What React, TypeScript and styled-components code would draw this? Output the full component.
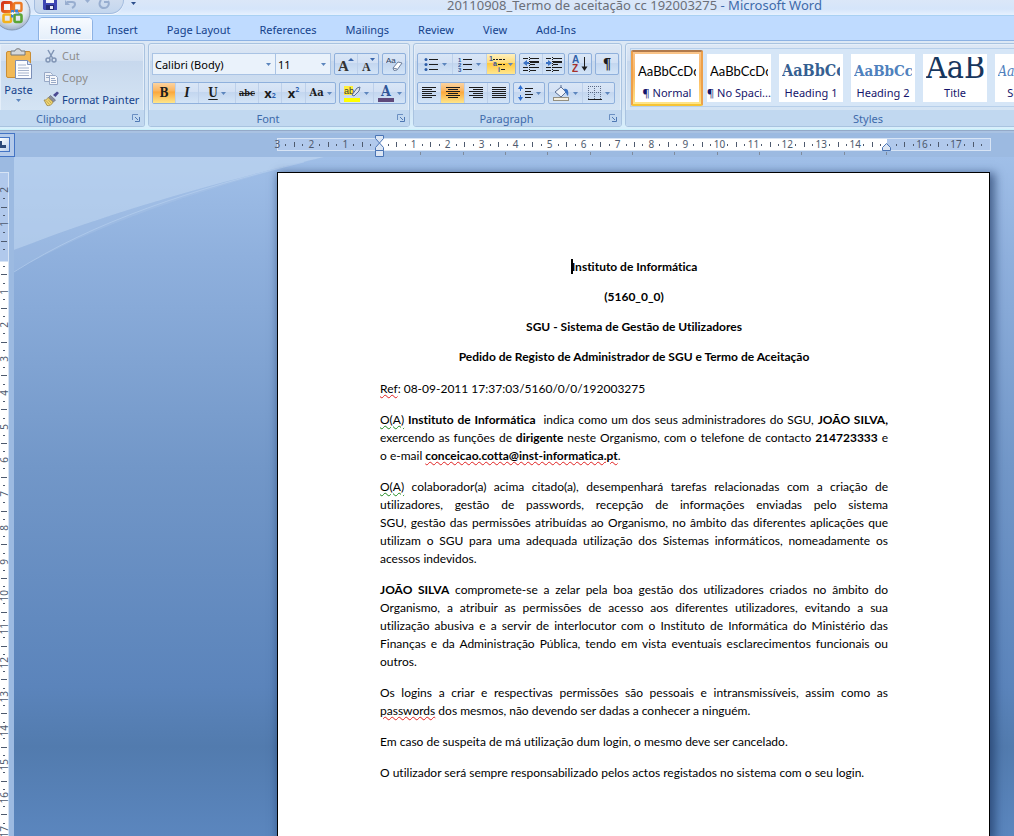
import React from 'react';
import styled, { createGlobalStyle, css } from 'styled-components';

const ui = `"Noto Sans", "Open Sans", sans-serif`;
const body = `Lato, "Open Sans", sans-serif`;
const cambria = `"DejaVu Serif Condensed", "DejaVu Serif", serif`;

const GlobalStyle = createGlobalStyle`
  *, *::before, *::after { box-sizing: border-box; }
  html, body { margin: 0; background: #5a85bd; }
  body { font-family: ${ui}; font-size: 11px; color: #15428b; }
  button, select { font: inherit; color: inherit; margin: 0; padding: 0; border: 0; background: none; }
  svg { display: block; flex: none; }
`;

const Window = styled.div`
  display: flex;
  flex-direction: column;
  min-height: 100vh;
  overflow: hidden;
`;

/* ---------- Title bar and tabs ---------- */

const Header = styled.header`
  position: relative;
`;

const TitleBar = styled.div`
  display: flex;
  height: 16px;
  overflow: hidden;
  background: linear-gradient(#dbe7f8, #d5e5fa 60%, #e6f1ff);
  border-bottom: 1px solid #a9d1f3;
`;

const QuickAccess = styled.div`
  display: flex;
  align-items: flex-start;
  gap: 8px;
  width: 90px;
  height: 14px;
  margin-left: 34px;
  padding-left: 8px;
  border: 1px solid #a3bcdf;
  border-top: 0;
  border-radius: 0 0 14px 6px;
  background: linear-gradient(#d0ddef, #c3d6ee);
  box-shadow: 0 1px 0 #f4f9ff;
`;

const QuickButton = styled.button`
  height: 10px;
  display: flex;
`;

const Customize = styled.button`
  display: flex;
  align-items: flex-start;
  width: 16px;
  padding: 2px 7px;
`;

const Title = styled.h1`
  margin: 0 0 0 307px;
  font-size: 13px;
  font-weight: 400;
  line-height: 10px;
  white-space: nowrap;
  color: #6b6f78;
`;

const AppName = styled.span`
  color: #3e6aaa;
`;

const OfficeButton = styled.button`
  position: absolute;
  left: 0;
  top: 0;
`;

const Tabs = styled.nav`
  display: flex;
  align-items: flex-end;
  gap: 1px;
  height: 25px;
  padding-left: 39px;
  overflow: hidden;
  background: #bfdbff;
  border-bottom: 1px solid #8db2e3;
`;

const Tab = styled.button<{ $active?: boolean }>`
  height: 22px;
  padding: 1px 14px 0;
  line-height: 22px;
  white-space: nowrap;
  border-radius: 4px 4px 0 0;
  ${(p) =>
    p.$active &&
    css`
      padding: 1px 11px 0;
      background: linear-gradient(#f8fbff, #e4eefa);
      box-shadow: inset 0 0 0 1px #f4f8fe, 0 0 0 1px #8db2e3;
    `}
`;

/* ---------- Ribbon ---------- */

const Ribbon = styled.div`
  display: flex;
  gap: 3px;
  height: 89px;
  padding: 2px 0;
  overflow: hidden;
  background: linear-gradient(#dce8f5, #d2e2f4 70%, #d8f0fc);
  border-bottom: 1px solid #c8f0fa;
`;

const Group = styled.section<{ $width: number; $first?: boolean }>`
  display: flex;
  flex-direction: column;
  flex: none;
  width: ${(p) => p.$width}px;
  border: 1px solid #a9c3e0;
  border-radius: 3px;
  overflow: hidden;
  background: linear-gradient(#dde8f5 0, #d3e0f1 20%, #c7d8ed 21%, #d9e8f6 100%);
  box-shadow: inset 0 0 0 1px #e4eef9;
  ${(p) =>
    p.$first &&
    css`
      border-left: 0;
      border-radius: 0 3px 3px 0;
    `}
`;

const GroupBody = styled.div`
  flex: 1;
  display: flex;
  min-height: 0;
`;

const GroupLabel = styled.div<{ $launcher?: boolean }>`
  display: flex;
  align-items: center;
  justify-content: center;
  height: 16px;
  padding-top: 1px;
  padding-right: ${(p) => (p.$launcher ? 22 : 0)}px;
  background: #c1d8f0;
  color: #3e6aaa;
  position: relative;
`;

const Launcher = styled.button`
  position: absolute;
  right: 4px;
  top: 4px;
`;

const PasteButton = styled.button`
  display: flex;
  flex-direction: column;
  align-items: center;
  gap: 2px;
  width: 37px;
  padding-top: 4px;
  line-height: 15px;
`;

const CommandList = styled.div`
  display: flex;
  flex-direction: column;
  padding: 1px 0 0 6px;
`;

const Command = styled.button`
  display: flex;
  align-items: center;
  gap: 3px;
  height: 22px;
  white-space: nowrap;
  &:disabled { color: #8d8d8d; }
`;

const Rows = styled.div`
  display: flex;
  flex-direction: column;
  gap: 7px;
  padding: 9px 3px 0;
`;

const Row = styled.div`
  display: flex;
  gap: 3px;
`;

const Cluster = styled.div`
  display: flex;
  height: 22px;
  border: 1px solid #8fb0dc;
  border-radius: 2px;
  background: linear-gradient(#d9e6f6 0, #d2e0f4 45%, #c3d6ef 46%, #d3e4f7 100%);
`;

const Tool = styled.button<{ $width: number; $on?: boolean }>`
  display: flex;
  align-items: center;
  justify-content: center;
  gap: 3px;
  width: ${(p) => p.$width}px;
  height: 20px;
  color: #1c1c1c;
  & + & { border-left: 1px solid #bdd0ea; }
  ${(p) =>
    p.$on &&
    css`
      background: linear-gradient(#fbd3a0 0, #fbb45c 40%, #fba73c 45%, #fee68a 100%);
    `}
`;

const GoldTool = styled(Tool)`
  gap: 1px;
  background: linear-gradient(#fff0bd 0, #fedb78 45%, #ffc83c 46%, #ffe68f 100%);
`;

const Combo = styled.label<{ $width: number }>`
  display: flex;
  align-items: center;
  width: ${(p) => p.$width}px;
  height: 22px;
  padding: 0 4px 0 2px;
  border: 1px solid #a9c3e4;
  background: #eaf2fb;
  color: #000;
  & + & { margin-left: -4px; }
  select { appearance: none; flex: 1; min-width: 0; outline: 0; }
`;

const Letter = styled.span<{ $size?: number }>`
  font-family: ${cambria};
  font-size: ${(p) => p.$size ?? 12}px;
  font-weight: 700;
  line-height: 14px;
  i, u, s { text-underline-offset: 2px; }
`;

const Script = styled.span<{ $up?: boolean }>`
  display: flex;
  align-items: ${(p) => (p.$up ? 'flex-start' : 'flex-end')};
  font-weight: 700;
  font-size: 13px;
  line-height: 14px;
  small { font-size: 7px; line-height: 8px; color: #2c5fae; }
`;

/* ---------- Styles gallery ---------- */

const Gallery = styled.div`
  display: flex;
  flex: 1;
  margin: 4px 0 3px 4px;
  border: 1px solid #b7cfea;
  background: #d6e6f7;
`;

const StyleCard = styled.button<{ $selected?: boolean }>`
  display: flex;
  flex: none;
  width: 72px;
  height: 56px;
  margin-top: 1px;
  padding: 4px;
  ${(p) =>
    p.$selected &&
    css`
      padding: 2px;
      border: 2px solid #f0a53a;
      border-color: #b07a4c #eda04a #f6c433 #eda04a;
      border-radius: 2px;
      background: linear-gradient(#f9c48a, #fbb45c 45%, #fee68a);
    `}
`;

const CardFace = styled.span`
  display: flex;
  flex-direction: column;
  flex: 1;
  height: 100%;
  padding: 3px 3px 0;
  min-width: 0;
  overflow: hidden;
  background: #fff;
`;

const Preview = styled.span<{ $face: string; $size: number; $line: number; $color: string; $bold?: boolean; $italic?: boolean }>`
  display: block;
  height: 28px;
  line-height: ${(p) => p.$line}px;
  overflow: hidden;
  text-align: left;
  white-space: nowrap;
  font-family: ${(p) => p.$face};
  font-size: ${(p) => p.$size}px;
  font-weight: ${(p) => (p.$bold ? 700 : 400)};
  font-style: ${(p) => (p.$italic ? 'italic' : 'normal')};
  color: ${(p) => p.$color};
`;

const StyleName = styled.span`
  margin: 0 -3px;
  line-height: 16px;
  text-align: center;
  white-space: nowrap;
  color: #15156b;
`;

/* ---------- Rulers ---------- */

const RulerBar = styled.div`
  display: flex;
  height: 27px;
  padding-top: 3px;
  overflow: hidden;
  background: linear-gradient(#94a9c8 0, #94a9c8 1px, #a9c2e2 1px, #a9c2e2 3px, #9cbae1 3px);
`;

const TabSelector = styled.button`
  width: 15px;
  height: 24px;
  padding: 3px 4px 4px 0;
  border: 1px solid #4474c4;
  border-left: 0;
  background: #b4caea;
  span {
    display: flex;
    align-items: center;
    height: 15px;
    border: 1px solid #4474c4;
    border-left: 0;
    background: linear-gradient(135deg, #fff, #b9cdea);
  }
`;

const Ruler = styled.div`
  display: flex;
  position: relative;
  height: 13px;
  margin: 5px 0 0 262px;
  color: #4e5a6e;
  font-size: 10px;
  line-height: 11px;
`;

const Zone = styled.div<{ $paper?: boolean; $width: number }>`
  flex: none;
  display: flex;
  width: ${(p) => p.$width}px;
  border: solid #d7e4f5;
  border-width: 1px 0;
  background: ${(p) => (p.$paper ? '#fff' : '#b1c9ec')};
  &:first-child { box-shadow: inset 1px 0 0 #d7e4f5; }
  &:nth-child(3) { border-right-width: 1px; }
`;

const ZoneMarks = styled.div<{ $width: number; $count: number; $before?: boolean }>`
  flex: none;
  display: grid;
  grid-template-columns: repeat(${(p) => p.$count}, minmax(0, 1fr));
  align-items: center;
  width: ${(p) => p.$width}px;
  margin-left: ${(p) => (p.$before ? -4 : 5)}px;
`;

const RulerNumber = styled.span`
  justify-self: center;
  white-space: nowrap;
`;

const Tick = styled.span<{ $long?: boolean; $down?: boolean }>`
  justify-self: center;
  align-self: center;
  width: ${(p) => (p.$down ? (p.$long ? 6 : 2) : 1)}px;
  height: ${(p) => (p.$down ? 1 : p.$long ? 5 : 2)}px;
  background: #4e5a6e;
`;

const Stops = styled.div`
  position: absolute;
  left: 102px;
  top: 14px;
  display: grid;
  grid-template-columns: repeat(12, 1fr);
  width: 508px;
  height: 3px;
  span { border-right: 1px solid #7f8b9c; }
`;

const Marker = styled.div<{ $left: number; $top: number }>`
  position: absolute;
  left: ${(p) => p.$left}px;
  top: ${(p) => p.$top}px;
`;

const Workspace = styled.div`
  flex: 1;
  display: flex;
`;

const SideBar = styled.div`
  flex: none;
  width: 14px;
  padding-top: 15px;
  background: #9cbae1;
  display: flex;
  flex-direction: column;
  color: #4e5a6e;
  font-size: 10px;
  line-height: 10px;
`;

const SideZone = styled.div<{ $paper?: boolean }>`
  width: 9px;
  border: solid #d7e4f5;
  border-width: 1px 1px 0 0;
  background: ${(p) => (p.$paper ? '#fff' : '#b1c9ec')};
  ${(p) => p.$paper ? css`flex: 1;` : css`height: 89px; padding-top: 13px;`}
`;

const SideMarks = styled.div<{ $count: number; $height: number }>`
  display: grid;
  width: 7px;
  height: ${(p) => p.$height}px;
  grid-template-rows: repeat(${(p) => p.$count}, minmax(0, 1fr));
  justify-items: center;
  margin-left: -1px;
`;

const SideNumber = styled.span`
  align-self: center;
  writing-mode: vertical-rl;
  transform: rotate(180deg);
`;

/* ---------- Document ---------- */

const Canvas = styled.main`
  position: relative;
  flex: 1;
  min-width: 0;
  display: flex;
  padding: 15px 24px 0 263px;
  overflow: hidden;
  background: linear-gradient(#a0bfe8 0, #8fb0dd 100px, #7297c8 310px, #5b84bb 530px, #527bae 590px, #5b86be 679px);
`;

const Swoosh = styled.svg`
  position: absolute;
  left: 0;
  top: 0;
`;

const Page = styled.article`
  position: relative;
  width: 713px;
  flex: none;
  padding: 85px 101px 40px 102px;
  border: 1px solid #000;
  border-bottom: 0;
  background: #fff;
  box-shadow: 3px 3px 9px 2px rgba(25, 50, 95, 0.65);
  color: #000;
  font-family: ${body};
  font-size: 12px;
  font-variant-ligatures: none;
  line-height: 18px;
`;

const Headings = styled.div`
  display: grid;
  gap: 12px;
  margin-bottom: 14px;
  text-align: center;
`;

const Heading = styled.h2`
  margin: 0;
  font-size: 12px;
  font-weight: 700;
`;

const Paragraph = styled.p`
  margin: 0 0 13px;
`;

const Line = styled.span<{ $full?: boolean }>`
  display: block;
  white-space: nowrap;
  ${(p) => p.$full && css`white-space: normal; text-align: justify; text-align-last: justify;`}
`;

const Flag = styled.span<{ $grammar?: boolean }>`
  text-decoration: underline wavy ${(p) => (p.$grammar ? '#1e8a1e' : '#e02020')} 1px;
  text-underline-offset: 1px;
`;

const Caret = styled.span`
  display: inline-block;
  width: 2px;
  height: 15px;
  margin-right: -1px;
  vertical-align: -3px;
  background: #000;
`;

/* ---------- Icons ---------- */

const Arrow = ({ color = '#5c85bd' }: { color?: string }) => (
  <svg width="5" height="3" viewBox="0 0 5 3"><path d="M0 0h5L2.500 3z" fill={color} /></svg>
);

const Logo = () => (
  <svg width="32" height="32" viewBox="0 0 32 32">
    <defs>
      <radialGradient id="orb" cx="0.5" cy="0.35" r="0.65">
        <stop offset="0" stopColor="#fff" />
        <stop offset="0.65" stopColor="#dfe6ef" />
        <stop offset="1" stopColor="#9fb0c6" />
      </radialGradient>
      <linearGradient id="red" x2="1" y2="1">
        <stop offset="0" stopColor="#d3341a" />
        <stop offset="1" stopColor="#f07a22" />
      </linearGradient>
    </defs>
    <circle cx="12" cy="12" r="18" fill="url(#orb)" stroke="#8497b3" />
    <g fill="none">
      <rect x="2.500" y="2.500" width="9" height="9" rx="1.500" stroke="url(#red)" strokeWidth="3" />
      <rect x="14" y="3" width="7.500" height="8" rx="1.500" stroke="#ec7a24" strokeWidth="2.400" />
      <rect x="3.500" y="14.500" width="7.500" height="7.500" rx="1.500" stroke="#f3b21c" strokeWidth="2.600" />
      <rect x="14.500" y="14.500" width="7" height="7.500" rx="1.500" stroke="#5ba535" strokeWidth="2.600" />
    </g>
    <path d="M11 10h3v3h-3zM15 9.500h3v3h-3zM11 14.500h2.500v3H11zM16 12h3v2.500h-3z" fill="#3f83cf" />
    <path d="M12.500 12v3M10.500 13h8" stroke="#fff" strokeWidth="0.800" />
  </svg>
);

const SaveIcon = () => (
  <svg width="14" height="10" viewBox="0 0 14 10">
    <path d="M0 0h14v10H1L0 9z" fill="#3d46b4" />
    <path d="M3 0h8v3H3z" fill="#f4f6fc" />
    <path d="M3 5h8v5H3z" fill="#232a75" />
    <path d="M7 6h3v3H7z" fill="#e9ecf8" />
  </svg>
);

const UndoIcon = () => (
  <svg width="12" height="10" viewBox="0 0 12 10">
    <path d="M2 2h5c4 0 4 4 0 6" fill="none" stroke="#98aed0" strokeWidth="2" />
    <path d="M0 0v5h5z" fill="#98aed0" />
  </svg>
);

const RedoIcon = () => (
  <svg width="13" height="10" viewBox="0 0 13 10">
    <path d="M3 0C0 4 2 8 6 8s6-4 4-7M10 2H6" fill="none" stroke="#98aed0" strokeWidth="2" />
  </svg>
);

const LauncherIcon = () => (
  <svg width="8" height="8" viewBox="0 0 8 8">
    <path d="M.5 6V.5H6" fill="none" stroke="#6a8fc2" />
    <path d="M3 3l3 3M7.500 3v4.500H3" fill="none" stroke="#4f78b3" />
  </svg>
);

const PasteIcon = () => (
  <svg width="28" height="32" viewBox="0 0 28 32">
    <rect x="1.500" y="3.500" width="24" height="26" rx="1.500" fill="#f2b957" stroke="#c98d35" />
    <path d="M6 3h4c0-3 6-3 6 0h4v4H6z" fill="#d5d8dc" stroke="#75787d" />
    <path d="M10.500 12.500h12l4 4v14h-16z" fill="#fbfcff" stroke="#7b8fb8" />
    <path d="M22.500 12.500v4h4" fill="#dbe4f4" stroke="#7b8fb8" />
    <path d="M13 17h8M13 20h11M13 22.500h11M13 25h11M13 27.500h11" stroke="#a7b4cd" />
  </svg>
);

const CutIcon = () => (
  <svg width="16" height="16" viewBox="0 0 16 16" fill="none" stroke="#8195b5" strokeWidth="1.500">
    <path d="M5 2l4.500 8M11 2L6.500 10" />
    <circle cx="5" cy="12" r="2" /><circle cx="11" cy="12" r="2" />
  </svg>
);

const CopyIcon = () => (
  <svg width="16" height="16" viewBox="0 0 16 16" stroke="#98a9c6">
    <path d="M1.500 2.500h6l2 2v7h-8z" fill="#edf1f8" />
    <path d="M6.500 5.500h6l2 2v7h-8z" fill="#f5f7fb" />
    <path d="M3 5.500h4M3 7.500h3M8 8.500h4M8 10.500h5M8 12.500h5" />
  </svg>
);

const BrushIcon = () => (
  <svg width="16" height="16" viewBox="0 0 16 16">
    <path d="M10 4l4-3.500 2 1.500-3.500 4z" fill="#4c4a92" />
    <path d="M7.500 4.500l5 4.500-2 2-5-4.500z" fill="#8b8e9c" stroke="#5c5f6e" strokeWidth="0.600" />
    <path d="M5 6.500l5 4.500c-1 3-4 4-6 3.500L1 9c2 .5 3-1 4-2.500z" fill="#f0d673" stroke="#9b8544" strokeWidth="0.800" />
    <path d="M3 9.500l3.500 4M5 8.500l3 3.500" stroke="#b89a48" strokeWidth="0.800" />
  </svg>
);

const EraserIcon = () => (
  <svg width="17" height="16" viewBox="0 0 17 16">
    <text x="0" y="7" fontSize="8" fontFamily="Liberation Sans" fill="#2d3f60">Aa</text>
    <path d="M7 12l5-6 4 1-5 7-3 .5z" fill="#fff" stroke="#6d7f9d" />
    <path d="M7 12l4 1" stroke="#6d7f9d" />
  </svg>
);

const HighlightIcon = () => (
  <svg width="17" height="17" viewBox="0 0 17 17">
    <path d="M0 1h9v9H0z" fill="#ffee3a" />
    <text x="0" y="9" fontSize="9" fontFamily="Liberation Sans" fill="#3a3a3a">ab</text>
    <path d="M8 10l5-7 3-1-1 4-5 5z" fill="#dfe4ee" stroke="#5b6f94" />
    <path d="M0 13h16v4H0z" fill="#ffff00" />
  </svg>
);

const FontColorIcon = () => (
  <svg width="16" height="17" viewBox="0 0 16 17">
    <text x="3" y="11" fontSize="14" fontWeight="700" fontFamily="DejaVu Serif Condensed" fill="#2f5597">A</text>
    <path d="M0 13h16v4H0z" fill="#5f497a" />
  </svg>
);

const SizeIcon = ({ up }: { up?: boolean }) => (
  <svg width="17" height="17" viewBox="0 0 17 17">
    <text x={up ? 0 : 2} y="15" fontSize={up ? 15 : 12} fontWeight="700" fontFamily="Liberation Serif" fill="#333">A</text>
    <path d={up ? 'M10 5h6l-3-3z' : 'M10 2h5l-2.500 3z'} fill="#3a66ab" />
  </svg>
);

const ListIcon = ({ numbered }: { numbered?: boolean }) => (
  <svg width="15" height="15" viewBox="0 0 15 15">
    {[2, 7, 12].map((y, i) => (
      <g key={y}>
        {numbered ? (
          <text x="0" y={y + 3} fontSize="6" fontWeight="700" fontFamily="Liberation Sans" fill="#2f5597">{i + 1}</text>
        ) : (
          <circle cx="2" cy={y + 0.5} r="1.500" fill="#2f5fa8" />
        )}
        <path d={`M5 ${y + 0.5}h9`} stroke="#1c1c1c" />
      </g>
    ))}
  </svg>
);

const MultilevelIcon = () => (
  <svg width="18" height="16" viewBox="0 0 18 16" fill="#3c559a" fontSize="7" fontWeight="700" fontFamily="Liberation Sans">
    <text x="0" y="5">1</text><text x="4" y="10">a</text><text x="9" y="16">i</text>
    <path d="M4 3.500h2m1 0h2m1 0h3m1 0h2M9 8.500h4m1 0h2M12 13.500h4" stroke="#1c1c1c" />
  </svg>
);

const IndentIcon = ({ right }: { right?: boolean }) => (
  <svg width="16" height="15" viewBox="0 0 16 15">
    <path d="M0 1.500h5M7 1.500h9M7 4.500h9M7 7.500h5M0 10.500h5M7 10.500h9M0 13.500h5M7 13.500h6" stroke="#1c1c1c" />
    <path d="M7 4h9v2H7z" fill="#1c1c1c" />
    <path d={right ? 'M6 6L2 3v2H0v2h2v2z' : 'M0 6l4-3v2h2v2H4v2z'} fill="#3a72c4" />
    <path d="M6.500 0v15" stroke="#1c1c1c" strokeDasharray="1 1" />
  </svg>
);

const SortIcon = () => (
  <svg width="16" height="18" viewBox="0 0 16 18" fontFamily="Liberation Sans" fontWeight="700" fontSize="10">
    <text x="0" y="8" fill="#2f5fa8">A</text>
    <text x="0" y="17" fill="#a5302a">Z</text>
    <path d="M12.500 2v13" stroke="#1c1c1c" />
    <path d="M9.500 11.500h6l-3 4.500z" fill="#1c1c1c" />
  </svg>
);

const AlignIcon = ({ mode }: { mode: 'left' | 'center' | 'right' | 'full' }) => (
  <svg width="14" height="14" viewBox="0 0 14 14" stroke="#1c1c1c">
    {[1, 3, 5, 7, 9, 11].map((y, i) => {
      const w = mode === 'full' || i % 2 === 0 ? 14 : 10;
      const x = mode === 'center' ? (14 - w) / 2 : mode === 'right' ? 14 - w : 0;
      return <path key={y} d={`M${x} ${y + 0.5}h${w}`} />;
    })}
  </svg>
);

const SpacingIcon = () => (
  <svg width="15" height="16" viewBox="0 0 15 16">
    <path d="M2.500 3v3M2.500 10v3" stroke="#2f6fd0" />
    <path d="M0 4l2.500-4L5 4zM0 12l2.500 4L5 12z" fill="#2f6fd0" />
    <path d="M7 3.500h8M7 6.500h6M7 9.500h8M7 12.500h6" stroke="#1c1c1c" />
  </svg>
);

const ShadingIcon = () => (
  <svg width="17" height="16" viewBox="0 0 17 16">
    <path d="M2 7l6-5 5 5-5 5z" fill="#eef2f8" stroke="#5b6f94" />
    <path d="M8 2V0" stroke="#5b6f94" />
    <path d="M11 4c4-1 5 3 4 7-2-1-1-3-3-4z" fill="#3a72c4" />
    <rect x="0.500" y="12.500" width="15" height="3" fill="#f3eee0" stroke="#948f80" />
  </svg>
);

const BordersIcon = () => (
  <svg width="14" height="14" viewBox="0 0 14 14" fill="none" stroke="#5a6a86" strokeDasharray="1 1">
    <path d="M.5 0v13M6.500 0v13M12.500 0v13M0 .5h13M0 6.500h13" />
    <path d="M0 13.500h14" stroke="#1c1c1c" strokeDasharray="none" />
  </svg>
);

/* ---------- Data ---------- */

const tabs = ['Home', 'Insert', 'Page Layout', 'References', 'Mailings', 'Review', 'View', 'Add-Ins'];

const styleCards = [
  { name: '¶ Normal', sample: 'AaBbCcDc', face: body, size: 13, line: 28, color: '#000' },
  { name: '¶ No Spaci...', sample: 'AaBbCcDc', face: body, size: 13, line: 28, color: '#000' },
  { name: 'Heading 1', sample: 'AaBbCc', face: cambria, size: 16, line: 28, color: '#365f91', bold: true },
  { name: 'Heading 2', sample: 'AaBbCc', face: cambria, size: 15, line: 28, color: '#4f81bd', bold: true },
  { name: 'Title', sample: 'AaB', face: cambria, size: 32, line: 20, color: '#17365d' },
  { name: 'Subtitle', sample: 'AaBbCc', face: cambria, size: 14, line: 28, color: '#4f81bd', italic: true },
];

const marks = (from: number, to: number, lead: string): string[] => {
  const out: string[] = lead.split('');
  const step = from <= to ? 1 : -1;
  for (let n = from; n !== to + step; n += step) out.push(String(n), '.', '|', '.');
  return out;
};

const HorizontalMarks = ({ items, width, before }: { items: string[]; width: number; before?: boolean }) => (
  <ZoneMarks $width={width} $count={items.length} $before={before}>
    {items.map((m, i) =>
      m === '.' || m === '|' ? <Tick key={i} $long={m === '|'} /> : <RulerNumber key={i}>{m}</RulerNumber>,
    )}
  </ZoneMarks>
);

const VerticalMarks = ({ items, height }: { items: string[]; height: number }) => (
  <SideMarks $count={items.length} $height={height}>
    {items.map((m, i) =>
      m === '.' || m === '|' ? <Tick key={i} $down $long={m === '|'} /> : <SideNumber key={i}>{m}</SideNumber>,
    )}
  </SideMarks>
);

const leftMarks = marks(3, 1, '');
const textMarks = marks(1, 14, '.|.');
const rightMarks = marks(16, 17, '.|.');

export default function App() {
  return (
    <Window>
      <GlobalStyle />
      <Header>
        <TitleBar>
          <QuickAccess>
            <QuickButton aria-label="Save"><SaveIcon /></QuickButton>
            <QuickButton aria-label="Undo"><UndoIcon /></QuickButton>
            <QuickButton aria-label="Undo history"><Arrow color="#98aed0" /></QuickButton>
            <QuickButton aria-label="Redo"><RedoIcon /></QuickButton>
          </QuickAccess>
          <Customize aria-label="Customize"><Arrow color="#2c4f8c" /></Customize>
          <Title>20110908_Termo de aceitação cc 192003275 <AppName>- Microsoft Word</AppName></Title>
        </TitleBar>
        <Tabs>
          {tabs.map((t) => <Tab key={t} $active={t === 'Home'}>{t}</Tab>)}
        </Tabs>
        <OfficeButton aria-label="Office"><Logo /></OfficeButton>
      </Header>

      <Ribbon>
        <Group $width={145} $first>
          <GroupBody>
            <PasteButton><PasteIcon />Paste<Arrow /></PasteButton>
            <CommandList>
              <Command disabled><CutIcon />Cut</Command>
              <Command disabled><CopyIcon />Copy</Command>
              <Command><BrushIcon />Format Painter</Command>
            </CommandList>
          </GroupBody>
          <GroupLabel $launcher>Clipboard<Launcher aria-label="Clipboard options"><LauncherIcon /></Launcher></GroupLabel>
        </Group>

        <Group $width={262}>
          <GroupBody>
            <Rows>
              <Row>
                <Combo $width={124}>
                  <select aria-label="Font"><option>Calibri (Body)</option></select><Arrow />
                </Combo>
                <Combo $width={56}>
                  <select aria-label="Font size"><option>11</option></select><Arrow />
                </Combo>
                <Cluster>
                  <Tool $width={22} aria-label="Grow font"><SizeIcon up /></Tool>
                  <Tool $width={21} aria-label="Shrink font"><SizeIcon /></Tool>
                </Cluster>
                <Cluster><Tool $width={22} aria-label="Clear formatting"><EraserIcon /></Tool></Cluster>
              </Row>
              <Row>
                <Cluster>
                  <Tool $width={22} $on><Letter><b>B</b></Letter></Tool>
                  <Tool $width={23}><Letter><i>I</i></Letter></Tool>
                  <Tool $width={37}><Letter><u>U</u></Letter><Arrow /></Tool>
                  <Tool $width={23}><Letter $size={9}><s>abc</s></Letter></Tool>
                  <Tool $width={23}><Script>x<small>2</small></Script></Tool>
                  <Tool $width={24}><Script $up>x<small>2</small></Script></Tool>
                  <Tool $width={30}><Letter $size={11}>Aa</Letter><Arrow /></Tool>
                </Cluster>
                <Cluster>
                  <Tool $width={33} aria-label="Highlight"><HighlightIcon /><Arrow /></Tool>
                  <Tool $width={32} aria-label="Font color"><FontColorIcon /><Arrow /></Tool>
                </Cluster>
              </Row>
            </Rows>
          </GroupBody>
          <GroupLabel $launcher>Font<Launcher aria-label="Font options"><LauncherIcon /></Launcher></GroupLabel>
        </Group>

        <Group $width={209}>
          <GroupBody>
            <Rows>
              <Row>
                <Cluster>
                  <Tool $width={34} aria-label="Bullets"><ListIcon /><Arrow /></Tool>
                  <Tool $width={34} aria-label="Numbering"><ListIcon numbered /><Arrow /></Tool>
                  <GoldTool $width={29} aria-label="Multilevel list"><MultilevelIcon /><Arrow /></GoldTool>
                </Cluster>
                <Cluster>
                  <Tool $width={22} aria-label="Decrease indent"><IndentIcon /></Tool>
                  <Tool $width={22} aria-label="Increase indent"><IndentIcon right /></Tool>
                </Cluster>
                <Cluster><Tool $width={22} aria-label="Sort"><SortIcon /></Tool></Cluster>
                <Cluster><Tool $width={22} aria-label="Show marks"><Letter $size={15}>¶</Letter></Tool></Cluster>
              </Row>
              <Row>
                <Cluster>
                  <Tool $width={22} aria-label="Align left"><AlignIcon mode="left" /></Tool>
                  <Tool $width={24} $on aria-label="Center"><AlignIcon mode="center" /></Tool>
                  <Tool $width={23} aria-label="Align right"><AlignIcon mode="right" /></Tool>
                  <Tool $width={22} aria-label="Justify"><AlignIcon mode="full" /></Tool>
                </Cluster>
                <Cluster><Tool $width={30} aria-label="Line spacing"><SpacingIcon /><Arrow /></Tool></Cluster>
                <Cluster>
                  <Tool $width={33} aria-label="Shading"><ShadingIcon /><Arrow /></Tool>
                  <Tool $width={32} aria-label="Borders"><BordersIcon /><Arrow /></Tool>
                </Cluster>
              </Row>
            </Rows>
          </GroupBody>
          <GroupLabel $launcher>Paragraph<Launcher aria-label="Paragraph options"><LauncherIcon /></Launcher></GroupLabel>
        </Group>

        <Group $width={486}>
          <GroupBody>
            <Gallery>
              {styleCards.map((c, i) => (
                <StyleCard key={c.name} $selected={i === 0}>
                  <CardFace>
                    <Preview $face={c.face} $size={c.size} $line={c.line} $color={c.color} $bold={c.bold} $italic={c.italic}>
                      {c.sample}
                    </Preview>
                    <StyleName>{c.name}</StyleName>
                  </CardFace>
                </StyleCard>
              ))}
            </Gallery>
          </GroupBody>
          <GroupLabel>Styles</GroupLabel>
        </Group>
      </Ribbon>

      <RulerBar>
        <TabSelector aria-label="Tab stop">
          <span><svg width="7" height="7" viewBox="0 0 7 7"><path d="M0 0h2v4h4v3H0z" fill="#2c4878" /></svg></span>
        </TabSelector>
        <Ruler>
          <Zone $width={102}><HorizontalMarks items={leftMarks} width={102} before /></Zone>
          <Zone $width={508} $paper><HorizontalMarks items={textMarks} width={501} /></Zone>
          <Zone $width={104}><HorizontalMarks items={rightMarks} width={94} /></Zone>
          <Stops>{Array.from({ length: 12 }, (_, i) => <span key={i} />)}</Stops>
          <Marker $left={98} $top={-3}>
            <svg width="9" height="22" viewBox="0 0 9 22" fill="#dce6f4" stroke="#4a74b4">
              <path d="M.5.500h8v3l-4 4.500-4-4.500z" />
              <path d="M4.500 8l4 4.500v3h-8v-3z" />
              <path d="M.5 15.500h8v6h-8z" />
            </svg>
          </Marker>
          <Marker $left={605} $top={5}>
            <svg width="9" height="8" viewBox="0 0 9 8"><path d="M4.500.500l4 4v3h-8v-3z" fill="#dce6f4" stroke="#4a74b4" /></svg>
          </Marker>
        </Ruler>
      </RulerBar>

      <Workspace>
        <SideBar>
          <SideZone><VerticalMarks items={marks(2, 1, '')} height={68} /></SideZone>
          <SideZone $paper><VerticalMarks items={marks(1, 17, '.|.').slice(0, 68)} height={574} /></SideZone>
        </SideBar>
        <Canvas>
          <Swoosh width="320" height="120" viewBox="0 0 320 120">
            <path d="M0 0H310C190 28 90 58 0 93z" fill="#c3d8f2" fillOpacity="0.600" />
            <path d="M0 93C90 58 190 28 310 0C180 34 80 68 0 115z" fill="#b4cdec" fillOpacity="0.250" />
            <path d="M0 115C80 64 180 32 290 5" fill="none" stroke="#bdd5f1" strokeOpacity="0.500" />
          </Swoosh>
          <Page>
            <Headings>
              <Heading><Caret />Instituto de Informática</Heading>
              <Heading>(5160_0_0)</Heading>
              <Heading>SGU - Sistema de Gestão de Utilizadores</Heading>
              <Heading>Pedido de Registo de Administrador de SGU e Termo de Aceitação</Heading>
            </Headings>
            <Paragraph><Flag>Ref</Flag>: 08-09-2011 17:37:03/5160/0/0/192003275</Paragraph>
            <Paragraph>
              <Line $full><Flag $grammar>O(A)</Flag> <b>Instituto de Informática</b>&nbsp; indica como um dos seus administradores do SGU, <b>JOÃO SILVA,</b></Line>
              <Line $full>exercendo as funções de <b>dirigente</b> neste Organismo, com o telefone de contacto <b>214723333</b> e</Line>
              <Line>o e-mail <Flag><b>conceicao.cotta@inst-informatica.pt</b></Flag>.</Line>
            </Paragraph>
            <Paragraph>
              <Line $full><Flag $grammar>O(A)</Flag> colaborador(a) acima citado(a), desempenhará tarefas relacionadas com a criação de</Line>
              <Line $full>utilizadores, gestão de passwords, recepção de informações enviadas pelo sistema</Line>
              <Line $full>SGU, gestão das permissões atribuídas ao Organismo, no âmbito das diferentes aplicações que</Line>
              <Line $full>utilizam o SGU para uma adequada utilização dos Sistemas informáticos, nomeadamente os</Line>
              <Line>acessos indevidos.</Line>
            </Paragraph>
            <Paragraph>
              <Line $full><b>JOÃO SILVA</b> compromete-se a zelar pela boa gestão dos utilizadores criados no âmbito do</Line>
              <Line $full>Organismo, a atribuir as permissões de acesso aos diferentes utilizadores, evitando a sua</Line>
              <Line $full>utilização abusiva e a servir de interlocutor com o Instituto de Informática do Ministério das</Line>
              <Line $full>Finanças e da Administração Pública, tendo em vista eventuais esclarecimentos funcionais ou</Line>
              <Line>outros.</Line>
            </Paragraph>
            <Paragraph>
              <Line $full>Os logins a criar e respectivas permissões são pessoais e intransmissíveis, assim como as</Line>
              <Line><Flag>passwords</Flag> dos mesmos, não devendo ser dadas a conhecer a ninguém.</Line>
            </Paragraph>
            <Paragraph>Em caso de suspeita de má utilização dum login, o mesmo deve ser cancelado.</Paragraph>
            <Paragraph>O utilizador será sempre responsabilizado pelos actos registados no sistema com o seu login.</Paragraph>
          </Page>
        </Canvas>
      </Workspace>
    </Window>
  );
}
